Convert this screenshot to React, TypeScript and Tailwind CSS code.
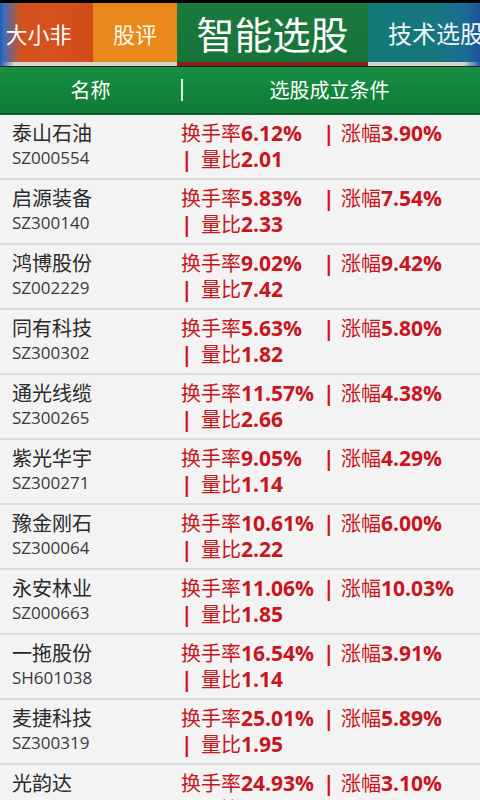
import React from "react";

const rows = [
  { name: "泰山石油", code: "SZ000554", hs: "6.12%", zf: "3.90%", lb: "2.01" },
  { name: "启源装备", code: "SZ300140", hs: "5.83%", zf: "7.54%", lb: "2.33" },
  { name: "鸿博股份", code: "SZ002229", hs: "9.02%", zf: "9.42%", lb: "7.42" },
  { name: "同有科技", code: "SZ300302", hs: "5.63%", zf: "5.80%", lb: "1.82" },
  { name: "通光线缆", code: "SZ300265", hs: "11.57%", zf: "4.38%", lb: "2.66" },
  { name: "紫光华宇", code: "SZ300271", hs: "9.05%", zf: "4.29%", lb: "1.14" },
  { name: "豫金刚石", code: "SZ300064", hs: "10.61%", zf: "6.00%", lb: "2.22" },
  { name: "永安林业", code: "SZ000663", hs: "11.06%", zf: "10.03%", lb: "1.85" },
  { name: "一拖股份", code: "SH601038", hs: "16.54%", zf: "3.91%", lb: "1.14" },
  { name: "麦捷科技", code: "SZ300319", hs: "25.01%", zf: "5.89%", lb: "1.95" },
  { name: "光韵达", code: "SZ300227", hs: "24.93%", zf: "3.10%", lb: "1.50" },
];

const font = { fontFamily: '"Noto Sans CJK SC", "Noto Sans", sans-serif' };
const num = { fontFamily: '"Open Sans", "Noto Sans", sans-serif' };

export default function App() {
  return (
    <div className="w-[480px] h-[800px] overflow-hidden bg-[#f2f2f2]" style={font}>
      {/* tab strip */}
      <div className="bg-black pt-[3px]">
        <div className="flex h-[59px]">
          <div className="w-[93px] flex items-center justify-center bg-[linear-gradient(90deg,#1a5fb0_0%,#3b6ec0_4%,#d2521f_22%,#d8511c_60%,#d34a1a_100%)] text-white text-[22px] leading-none">
            <span className="-ml-[16px]">大小非</span>
          </div>
          <div className="w-[84px] flex items-center justify-center bg-[#e8891a] text-[#fff8ec] text-[22px] leading-none">
            股评
          </div>
          <div className="w-[191px] flex items-center justify-center bg-[linear-gradient(180deg,#1d7a3e_0%,#16733a_100%)] text-white text-[38px] leading-none">
            智能选股
          </div>
          <div className="flex-1 flex items-center pl-[20px] overflow-hidden whitespace-nowrap bg-[linear-gradient(90deg,#127a78_0%,#17767e_60%,#1a6b94_88%,#1e4f9e_100%)] text-[#eef6f6] text-[24px] leading-none">
            技术选股
          </div>
        </div>
        <div className="flex h-[4px]">
          <div className="w-[177px] bg-[linear-gradient(90deg,#2a5aa8_0%,#d8d8d2_8%,#d6d6d0_100%)]" />
          <div className="w-[191px] bg-[#8a1f1a]" />
          <div className="flex-1 bg-[linear-gradient(90deg,#d6d6d0_0%,#d6d6d0_85%,#2a5aa8_100%)]" />
        </div>
        <div className="h-[1px] bg-[#222]" />
      </div>
      {/* header */}
      <div className="h-[48px] flex items-center bg-[linear-gradient(180deg,#189044_0%,#12853c_50%,#0f7a36_100%)] border-b-2 border-[#0c5e2a]">
        <div className="w-[181px] flex justify-center text-white text-[20px] leading-none">名称</div>
        <div className="w-[2px] h-[22px] bg-[#e8f5ec]" />
        <div className="flex-1 flex justify-center text-white text-[20px] leading-none pr-[4px]">选股成立条件</div>
      </div>
      {/* list */}
      <div className="flex flex-col">
        {rows.map((r, i) => (
          <div key={i} className="h-[65px] flex border-b-2 border-[#dcdcdc] bg-[#f3f3f3]">
            <div className="w-[181px] pl-[12px] pt-[4px] flex flex-col">
              <div className="text-[20px] leading-[27px] text-[#2b2b2b]">{r.name}</div>
              <div className="text-[17px] leading-[24px] text-[#3a3a3a]" style={num}>{r.code}</div>
            </div>
            <div className="flex-1 pt-[4px] text-[#c8161e] text-[20px]">
              <div className="flex items-baseline leading-[27px] whitespace-nowrap">
                <span className="w-[142px] shrink-0">
                  换手率<b className="font-bold text-[21px]" style={num}>{r.hs}</b>
                </span>
                <b className="font-bold w-[18px] shrink-0 text-[21px]" style={num}>|</b>
                <span>
                  涨幅<b className="font-bold text-[21px]" style={num}>{r.zf}</b>
                </span>
              </div>
              <div className="flex items-baseline leading-[24px] whitespace-nowrap">
                <b className="font-bold w-[20px] text-[21px]" style={num}>|</b>
                <span>
                  量比<b className="font-bold text-[21px]" style={num}>{r.lb}</b>
                </span>
              </div>
            </div>
          </div>
        ))}
      </div>
    </div>
  );
}
